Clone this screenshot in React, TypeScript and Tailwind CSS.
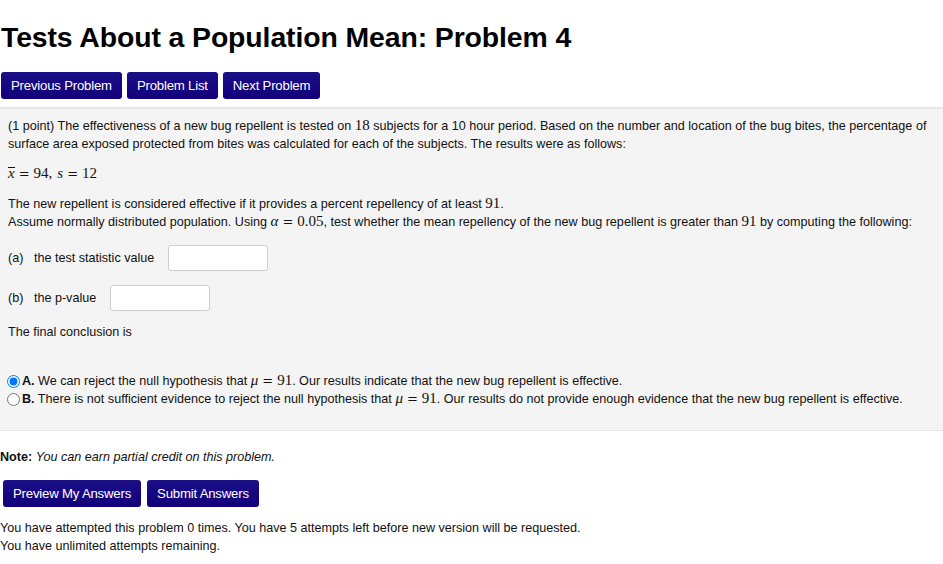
import React from "react";

const M: React.FC<{ children: React.ReactNode }> = ({ children }) => (
	<span className="font-['Liberation_Serif',serif] text-[15px] leading-[0]">{children}</span>
);
const I: React.FC<{ children: React.ReactNode }> = ({ children }) => (
	<span className="italic font-['Liberation_Serif',serif] text-[15px] leading-[0]">{children}</span>
);
const Eq = () => <span className="font-['DejaVu_Serif',serif] text-[13px] leading-[0] mx-[4px]">=</span>;

const NavButton: React.FC<{ label: string }> = ({ label }) => (
	<button className="h-[27px] px-[10px] rounded-[3px] bg-gradient-to-b from-[#1a0f86] to-[#12007a] text-white text-[13.2px] tracking-[-0.2px]">
		{label}
	</button>
);

export default function App() {
	return (
		<div className="w-[943px] h-[564px] bg-white text-[#111] font-['Liberation_Sans',Arial,sans-serif] text-[12.6px] overflow-hidden">
			{/* TITLE *************************************************** */}
			<h1 className="pt-[19px] pl-[1px] text-[28.4px] font-bold leading-[36px] tracking-[-0.1px] text-black">
				Tests About a Population Mean: Problem 4
			</h1>

			{/* NAV *************************************************** */}
			<div className="mt-[17px] pl-[1px] flex gap-[5px]">
				<NavButton label="Previous Problem" />
				<NavButton label="Problem List" />
				<NavButton label="Next Problem" />
			</div>

			{/* PROBLEM BOX *************************************************** */}
			<div className="mt-[8px] bg-[#f4f4f4] border-t-[2px] border-b border-[#e6e6e6] pl-[8px] pt-[8px] pb-[22px] leading-[18px]">
				<p>
					(1 point) The effectiveness of a new bug repellent is tested on <M>18</M> subjects for a 10 hour period. Based on the number and location of the bug bites, the percentage of surface area exposed protected from bites was calculated for each of the subjects. The results were as follows:
				</p>
				<p className="mt-[12px]">
					<I>
						<span className="inline-block border-t border-[#111] leading-[11px]">x</span>
					</I>
					<Eq />
					<M>94,</M>
					<span className="ml-[5px]" />
					<I>s</I>
					<Eq />
					<M>12</M>
				</p>
				<p className="mt-[12px]">
					The new repellent is considered effective if it provides a percent repellency of at least <M>91</M>.
					<br />
					Assume normally distributed population. Using <I>α</I>
					<Eq />
					<M>0.05</M>, test whether the mean repellency of the new bug repellent is greater than <M>91</M> by computing the following:
				</p>

				<div className="mt-[14px] flex items-center gap-[14px] h-[26px]">
					<span>(a)&nbsp;&nbsp; the test statistic value</span>
					<input className="w-[100px] h-[26px] bg-white border border-[#cfcfcf] rounded-[3px]" />
				</div>
				<div className="mt-[14px] flex items-center gap-[14px] h-[26px]">
					<span>(b)&nbsp;&nbsp; the p-value</span>
					<input className="w-[100px] h-[26px] bg-white border border-[#cfcfcf] rounded-[3px]" />
				</div>
				<p className="mt-[12px]">The final conclusion is</p>

				<div className="mt-[31px] -ml-[1px]">
					<label className="flex items-center gap-[2px] h-[18px]">
						<input type="radio" name="c" defaultChecked className="m-0 w-[13px] h-[13px]" />
						<span>
							<b>A.</b> We can reject the null hypothesis that <I>μ</I>
							<Eq />
							<M>91</M>. Our results indicate that the new bug repellent is effective.
						</span>
					</label>
					<label className="flex items-center gap-[2px] h-[18px]">
						<input type="radio" name="c" className="m-0 w-[13px] h-[13px]" />
						<span>
							<b>B.</b> There is not sufficient evidence to reject the null hypothesis that <I>μ</I>
							<Eq />
							<M>91</M>. Our results do not provide enough evidence that the new bug repellent is effective.
						</span>
					</label>
				</div>
			</div>

			{/* FOOTER *************************************************** */}
			<p className="mt-[17px] leading-[18px]">
				<b>Note:</b> <i>You can earn partial credit on this problem.</i>
			</p>
			<div className="mt-[14px] pl-[3px] flex gap-[6px]">
				<NavButton label="Preview My Answers" />
				<NavButton label="Submit Answers" />
			</div>
			<p className="mt-[12px] leading-[18px]">
				You have attempted this problem 0 times. You have 5 attempts left before new version will be requested.
				<br />
				You have unlimited attempts remaining.
			</p>
		</div>
	);
}
